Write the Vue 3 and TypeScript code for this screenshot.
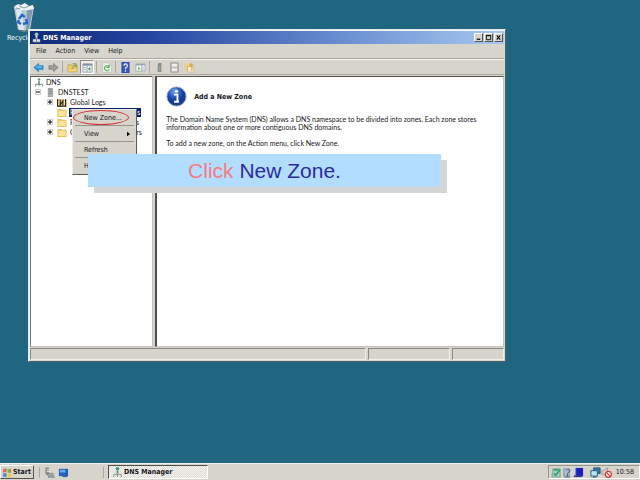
<script setup lang="ts">
import { computed, ref } from 'vue'

interface TreeNode {
  label: string
  level: number
  icon: 'root' | 'server' | 'log' | 'folder'
  toggle?: 'open' | 'closed'
  selected?: boolean
}

const menus: string[] = ['File', 'Action', 'View', 'Help']

const nodes: TreeNode[] = [
  { label: 'DNS', level: 0, icon: 'root' },
  { label: 'DNSTEST', level: 1, icon: 'server', toggle: 'open' },
  { label: 'Global Logs', level: 2, icon: 'log', toggle: 'closed' },
  { label: 'Forward Lookup Zones', level: 2, icon: 'folder', selected: true },
  { label: 'Reverse Lookup Zones', level: 2, icon: 'folder', toggle: 'closed' },
  { label: 'Conditional Forwarders', level: 2, icon: 'folder', toggle: 'closed' },
]

const selected = ref<string>(nodes.find((n) => n.selected)?.label ?? '')
const rows = computed(() => nodes.map((n) => ({ ...n, selected: n.label === selected.value })))
</script>

<template>
  <div class="desktop">
    <main class="workspace">
      <a class="shortcut" href="#recycle">
        <svg class="bin" viewBox="0 0 24 30" aria-hidden="true">
          <path d="M2 4 L22 4 L18 27 Q12 30 6 27 Z" fill="#b9cbd8" />
          <path d="M4 7 L9 5 L12 27 L7 27 Z" fill="#dfe9f0" />
          <path d="M15 5 L21 5 L17 27 L14 28 Z" fill="#8299ad" />
          <path d="M2 4 Q5 0 9 2 L13 0 L17 3 L21 2 L22 6 Q12 9 2 5 Z" fill="#edf2f5" />
          <path d="M7 3 L12 5 L17 3 M4 5 L8 6" stroke="#8499a8" fill="none" />
          <path d="M7 16 L10 12 L13 14 M14 16 L15 20 L11 21 M9 21 L6 19 L7 17" fill="none" stroke="#2866c7" stroke-width="2.4" />
          <path d="M6 27 Q12 29 18 27" stroke="#52697a" fill="none" />
        </svg>
        <span>Recycle Bin</span>
      </a>

      <section class="window" aria-label="DNS Manager">
        <header class="titlebar">
          <svg class="icon" viewBox="0 0 12 12" aria-hidden="true">
            <circle cx="6" cy="2.5" r="2" fill="#83cfc0" />
            <path d="M5 4h2v4H5zM2 8h8v3H2z" fill="#dce3e5" />
            <path d="M2 11h8M6 6v4" stroke="#6b7b88" />
          </svg>
          <h1>DNS Manager</h1>
          <div class="controls">
            <button type="button" aria-label="Minimize"><svg viewBox="0 0 8 7"><path d="M2 5.5h4" stroke="#000" stroke-width="1.4" /></svg></button>
            <button type="button" aria-label="Maximize"><svg viewBox="0 0 8 7"><path d="M1.5 1h5v5h-5zM1.5 1.5h5" fill="none" stroke="#000" /></svg></button>
            <button type="button" aria-label="Close"><svg viewBox="0 0 8 7"><path d="M2 1l4 5M6 1L2 6" stroke="#000" stroke-width="1.2" /></svg></button>
          </div>
        </header>

        <nav class="menubar">
          <button v-for="menu in menus" :key="menu" type="button">{{ menu }}</button>
        </nav>

        <div class="toolbar">
          <button type="button" aria-label="Back"><svg viewBox="0 0 12 12"><path d="M1 6L6 1.5V4h5v4H6v2.5z" fill="#2e9be0" stroke="#1c70b5" stroke-width=".7" /><path d="M4 5.5h6" stroke="#8bd3f7" /></svg></button>
          <button type="button" aria-label="Forward"><svg viewBox="0 0 12 12"><path d="M11 6L6 1.5V4H1v4h5v2.5z" fill="#999b99" stroke="#747674" stroke-width=".7" /></svg></button>
          <i class="divider"></i>
          <button type="button" aria-label="Up one level"><svg viewBox="0 0 12 12"><path d="M1 3h4l1 1h5v7H1z" fill="#edca67" stroke="#bd9548" stroke-width=".6" /><path d="M5 8l4-5M6 2h4v4" stroke="#66963d" fill="none" /><path d="M2 9h8" stroke="#fae8a0" /></svg></button>
          <button class="pressed" type="button" aria-label="Show console tree"><svg viewBox="0 0 12 12"><path d="M1 2h10v9H1z" fill="#f4f6f7" stroke="#868d96" stroke-width=".8" /><path d="M1 3h10" stroke="#7e8ea7" stroke-width="2" /><path d="M5.5 4v7M2 6h2M2 8h2" stroke="#7186a0" stroke-width=".8" /><path d="M9 5v5L6.500 7.500z" fill="#559556" /></svg></button>
          <i class="divider"></i>
          <button type="button" aria-label="Refresh"><svg viewBox="0 0 12 12"><path d="M2 1h6l3 3v7H2z" fill="#f9fbf8" stroke="#b1b8b0" stroke-width=".7" /><path d="M8.500 5A2.700 2.700 0 1 0 9 8M8.800 3v3H6" fill="none" stroke="#4caa50" stroke-width="1.2" /></svg></button>
          <i class="divider"></i>
          <button type="button" aria-label="Help"><svg viewBox="0 0 12 12"><path d="M2 0h8v12H2z" fill="#3856c0" stroke="#263e93" stroke-width=".7" /><path d="M4.300 4Q4.300 2 6 2T8 4Q8 5.500 6 6.500V8M6 9v1.500" fill="none" stroke="#fff" stroke-width="1.2" /></svg></button>
          <button type="button" aria-label="Show action pane"><svg viewBox="0 0 12 12"><path d="M1 2h10v8H1z" fill="#f4f6f7" stroke="#9ba0a6" stroke-width=".8" /><path d="M1 3h10" stroke="#8c9bb0" stroke-width="1.400" /><path d="M7.500 4v6M9 6h1M9 8h1" stroke="#7186a0" stroke-width=".8" /><path d="M3.500 5v4L6 7z" fill="#67a867" /></svg></button>
          <i class="divider"></i>
          <button type="button" aria-label="Server"><svg viewBox="0 0 12 12"><path d="M5 1h3v10H4V4z" fill="#858783" /><path d="M5 5h2M5 7h2M5 9h2" stroke="#c9cbc6" stroke-width=".8" /></svg></button>
          <button type="button" aria-label="Record"><svg viewBox="0 0 12 12"><path d="M2 1h8v10H2z" fill="#bfc1be" stroke="#81827f" stroke-width=".8" /><path d="M3 2h6v3H3zM3 7h6v3H3z" fill="#efefeb" /></svg></button>
          <button type="button" aria-label="New record"><svg viewBox="0 0 12 12"><path d="M1 3l5-2 4 2-1 7-5 1-3-3z" fill="#f1cd82" /><path d="M4 5h6v6H4z" fill="#fff4dc" stroke="#c79a61" stroke-width=".6" /><path d="M6 4l3 3-2 3M8 1v4M6 3h4" fill="none" stroke="#d59635" stroke-width=".9" /></svg></button>
        </div>

        <div class="panes">
          <aside class="tree">
            <ul>
              <li v-for="node in rows" :key="node.label" :class="['node', `level-${node.level}`]">
                <span v-if="node.level" class="toggle">
                  <svg v-if="node.toggle" viewBox="0 0 6 6"><path d="M.5.5h5v5h-5z" fill="#fff" stroke="#aaa" stroke-width=".6" /><path d="M1 3h4" stroke="#000" /><path v-if="node.toggle === 'closed'" d="M3 1v4" stroke="#000" /></svg>
                </span>
                <svg class="node-icon" viewBox="0 0 10 10" aria-hidden="true">
                  <template v-if="node.icon === 'root'"><circle cx="5" cy="1.500" r="1.300" fill="#3d9b83" /><path d="M4 3h2v4H4z" fill="#89989b" /><path d="M1 9.500V7h8v2.500M5 6v3" fill="none" stroke="#6d7876" /></template>
                  <template v-else-if="node.icon === 'server'"><path d="M3 0h4l1 1v9H3z" fill="#aeb6b3" stroke="#7b8582" stroke-width=".6" /><path d="M4 2h3M4 4h3M4 6h3" stroke="#65716d" stroke-width=".7" /></template>
                  <template v-else>
                    <path d="M0 1h4l1 1h5v8H0z" fill="#e4bd54" /><path d="M1 3h8v6H1z" fill="#fae59a" />
                    <path v-if="node.icon === 'log'" d="M0 1v8h9V1M3 2v6l3-5v5" fill="none" stroke="#27271f" stroke-width="1.300" />
                  </template>
                </svg>
                <button type="button" :class="{ selected: node.selected }" @click="selected = node.label">{{ node.label }}</button>
              </li>
            </ul>
          </aside>

          <article class="details">
            <div class="heading">
              <svg viewBox="0 0 22 22" aria-hidden="true">
                <defs><radialGradient id="blue" cx="40%" cy="25%"><stop offset="0" stop-color="#75a2ee" /><stop offset=".6" stop-color="#2858c4" /><stop offset="1" stop-color="#183b96" /></radialGradient></defs>
                <circle cx="11" cy="11" r="10" fill="url(#blue)" stroke="#8c9fb7" />
                <circle cx="11" cy="5.500" r="1.700" fill="#fff" /><path d="M8.500 9H12v7h1.500M8.500 16.500h5" fill="none" stroke="#fff" stroke-width="2" />
              </svg>
              <h2>Add a New Zone</h2>
            </div>
            <p>The Domain Name System (DNS) allows a DNS namespace to be divided into zones. Each zone stores information about one or more contiguous DNS domains.</p>
            <p>To add a new zone, on the Action menu, click New Zone.</p>
          </article>
        </div>

        <footer class="statusbar"><span></span><span></span><span></span></footer>
      </section>

      <div class="context-menu" role="menu">
        <button type="button" role="menuitem">New Zone...</button>
        <button type="button" role="menuitem">View<svg viewBox="0 0 4 6"><path d="M0 0l4 3-4 3z" /></svg></button>
        <button type="button" role="menuitem">Refresh</button>
        <button type="button" role="menuitem">Help</button>
      </div>
      <div class="ring"></div>
      <div class="callout"><strong>Click</strong> New Zone.</div>
    </main>

    <footer class="taskbar">
      <button class="start" type="button">
        <svg viewBox="0 0 12 12" aria-hidden="true"><path d="M1 3q2-2 4-1v4q-2-1-4 0z" fill="#dd7049" /><path d="M6 2q2 1 4 0v4q-2 1-4 0z" fill="#83ad47" /><path d="M1 7q2-1 4 0v4q-2-1-4 0z" fill="#4e8dce" /><path d="M6 7q2 1 4 0v4q-2 1-4 0z" fill="#eec74d" /></svg>
        Start
      </button>
      <div class="quick">
        <button type="button" aria-label="Server Manager"><svg viewBox="0 0 12 12"><path d="M2 1h3v7H2z" fill="#8b9491" stroke="#5f6864" stroke-width=".5" /><path d="M4 7h6v2H4zM5 10h6v2H5z" fill="#b6bdb9" stroke="#5f6864" stroke-width=".6" /><path d="M3 3h3M3 5h4" stroke="#e8ece9" /></svg></button>
        <button type="button" aria-label="Show desktop"><svg viewBox="0 0 12 12"><path d="M1 2h10v8H1z" fill="#2761b7" /><path d="M2 3h6v3H2z" fill="#6aa8e7" /><path d="M5 10h5v1H5z" fill="#2a4a80" /></svg></button>
      </div>
      <button class="task" type="button">
        <svg viewBox="0 0 12 12" aria-hidden="true"><circle cx="6" cy="2" r="2" fill="#3c9b87" /><path d="M5 4h2v3H5z" fill="#788885" /><path d="M2 11V8h8v3M6 7v4" fill="none" stroke="#84908c" /></svg>
        DNS Manager
      </button>
      <div class="tray">
        <svg viewBox="0 0 12 12"><path d="M2 2h8v9H1z" fill="#9acfbd" stroke="#5d9a8b" stroke-width=".7" /><path d="M3 7l2 2 5-6M3 3h5" stroke="#2b9964" fill="none" stroke-width="1.400" /></svg>
        <svg viewBox="0 0 12 12"><path d="M2 2h6v8H2z" fill="#aebccc" stroke="#657489" stroke-width=".7" /><path d="M5 4q1-3 4 0L6 7v3M3 11h6" stroke="#455c89" fill="none" /></svg>
        <svg viewBox="0 0 12 12"><path d="M3 1h8v9H3z" fill="#1d21bb" /><path d="M1 9h9v2H1z" fill="#30359b" /><path d="M3 1v9" stroke="#777cc4" /></svg>
        <svg class="gap" viewBox="0 0 12 12"><path d="M4 1h7v6H4z" fill="#347baa" stroke="#234e72" /><path d="M1 4h7v6H1z" fill="#bce2f0" stroke="#255574" /><path d="M3 11h4" stroke="#255574" /></svg>
        <svg viewBox="0 0 12 12"><path d="M1 4h2l4-3v10L3 8H1z" fill="#d4d7d7" stroke="#7d8587" stroke-width=".7" /><circle cx="8" cy="8" r="3.300" fill="#fff" stroke="#dc3434" stroke-width="1.300" /><path d="M6 6l4 4" stroke="#dc3434" stroke-width="1.200" /></svg>
        <time>10:58</time>
      </div>
    </footer>
  </div>
</template>

<style>
body { margin: 0; background: #206680; }
</style>

<style scoped>
* { box-sizing: border-box; }
.desktop { min-height: 100vh; display: flex; flex-direction: column; background: #206680; color: #17171b; font: 7px/10px "DejaVu Sans Condensed", "DejaVu Sans", sans-serif; overflow: hidden; }
button { font: inherit; color: inherit; border: 0; padding: 0; margin: 0; background: none; }
svg { display: block; flex: none; }
.workspace { flex: 1; position: relative; }
.shortcut { position: absolute; left: 7px; top: 3px; display: flex; flex-direction: column; align-items: flex-start; color: #fff; text-decoration: none; white-space: nowrap; }
.bin { width: 24px; height: 30px; margin-left: 5px; }

.window { position: absolute; left: 28px; top: 29px; right: 134px; bottom: 101px; display: flex; flex-direction: column; padding: 1px; background: #d7d4cc; border: 1px solid; border-color: #e4eaec #4d6269 #4d6269 #e4eaec; box-shadow: inset 1px 1px #f4f4f0; }
.titlebar { display: flex; align-items: center; height: 13px; gap: 1px; padding: 0 1px; background: linear-gradient(90deg, #102978 0%, #2445a0 25%, #7196d5 70%, #a6c8ef 100%); color: #fff; }
.icon { width: 11px; height: 11px; }
h1 { flex: 1; margin: 0; font-size: 7px; font-weight: bold; }
.controls { display: flex; gap: 1px; }
.controls button { width: 9px; height: 9px; background: #d7d4cc; border: 1px solid; border-color: #fff #555 #555 #fff; }
.controls svg { width: 7px; height: 7px; }
.menubar { display: flex; gap: 9px; align-items: center; height: 15px; padding: 0 6px; border-bottom: 1px solid #aaa8a2; }
.toolbar { display: flex; align-items: center; height: 16px; gap: 1px; padding: 0 1px; border-top: 1px solid #f3f2ee; border-bottom: 1px solid #aaa8a2; }
.toolbar button { display: grid; place-items: center; width: 14px; height: 14px; }
.toolbar svg { width: 11px; height: 11px; }
.toolbar .pressed { background: #f0efec; border: 1px solid; border-color: #8e8c87 #fff #fff #8e8c87; }
.divider { width: 1px; height: 12px; margin: 0 1px; background: #aaa8a2; }
.panes { flex: 1; display: grid; grid-template-columns: 26% 1fr; gap: 2px; padding-top: 1px; min-height: 0; font-family: Lato, "DejaVu Sans Condensed", sans-serif; }
.tree, .details { background: #fff; border: 1px solid; border-color: #55544f #c5c3bd #c5c3bd #77756f; overflow: hidden; }
ul { list-style: none; margin: 0; padding: 0 3px; }
.node { display: flex; align-items: center; height: 10px; gap: 2px; white-space: nowrap; }
.node button { padding: 0 1px; line-height: 9px; }
.node .selected { background: #0a246a; color: #fff; }
.level-0 { gap: 1px; }
.level-1 { padding-left: 1px; }
.level-2 { padding-left: 13px; }
.toggle, .toggle svg { width: 6px; height: 6px; }
.toggle { margin-right: 2px; }
.node-icon { width: 10px; height: 9px; }
.details { padding: 9px 24px 8px 9px; border-left: 2px solid #4e4d4a; line-height: 8px; }
.heading { display: flex; align-items: center; gap: 7px; margin-bottom: 8px; }
.heading svg { width: 21px; height: 21px; }
h2 { margin: 0; font: bold 7px/8px "DejaVu Sans Condensed", "DejaVu Sans", sans-serif; }
p { margin: 0 0 8px; }
.statusbar { display: grid; grid-template-columns: 1fr 82px 52px; gap: 2px; height: 13px; padding-top: 1px; }
.statusbar span { border: 1px solid; border-color: #8b8984 #f2f1ed #f2f1ed #8b8984; }

.context-menu { position: absolute; left: 72px; top: 109px; width: 65px; padding: 0 2px; background: #d7d4cc; border: 1px solid; border-color: #ecebe6 #5b5a55 #5b5a55 #ecebe6; }
.context-menu button { display: flex; align-items: center; justify-content: space-between; width: 100%; height: 16px; padding: 0 4px 0 9px; border-bottom: 1px solid #96948e; white-space: nowrap; }
.context-menu button:last-child { border-bottom: 0; }
.context-menu svg { width: 3px; height: 6px; }
.ring { position: absolute; left: 73px; top: 110px; width: 56px; height: 15px; border: 1px solid #d62f35; border-radius: 50%; pointer-events: none; }
.callout { position: absolute; left: 88px; top: 154px; width: 353px; padding: 4px; background: #b2ddff; box-shadow: 6px 6px #d5d5d3; color: #2b2c9c; font: 21px/25px "Liberation Sans", Arial, sans-serif; text-align: center; }
.callout strong { font-weight: normal; color: #f47b80; }

.taskbar { display: flex; align-items: center; height: 17px; padding: 1px 0; background: #d7d4cc; border-top: 1px solid #f0efeb; }
.start, .task { display: flex; align-items: center; gap: 2px; height: 14px; font-weight: bold; border: 1px solid; }
.start { width: 34px; padding: 0 1px; border-color: #fff #55534e #55534e #fff; gap: 0; }
.start svg, .task svg, .tray svg { width: 11px; height: 11px; }
.quick { display: flex; gap: 3px; width: 65px; margin-left: 5px; padding-left: 4px; border-left: 1px solid #aaa8a2; border-right: 1px solid #aaa8a2; }
.quick button, .quick svg { width: 11px; height: 11px; }
.task { width: 100px; margin-left: 4px; padding: 0 3px; gap: 1px; border-color: #504e4a #fff #fff #504e4a; background: repeating-conic-gradient(#f4f3f0 0 25%, #dedcd6 0 50%) 0 0 / 2px 2px; }
.tray { display: flex; align-items: center; height: 14px; margin-left: auto; padding: 0 5px 0 2px; border: 1px solid; border-color: #96948e #fff #fff #96948e; }
.tray .gap { margin-left: 6px; }
.tray time { margin-left: 4px; }
</style>
